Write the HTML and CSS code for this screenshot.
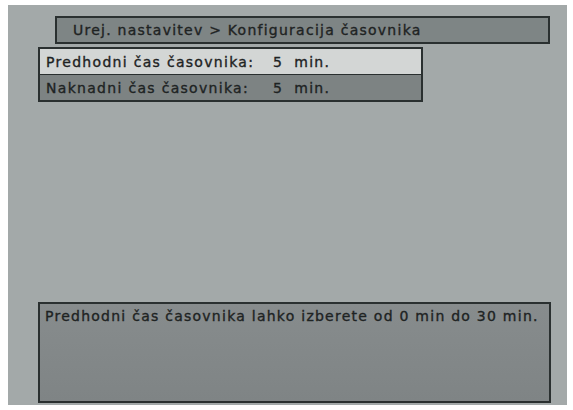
FILE: index.html
```html
<!DOCTYPE html>
<html>
<head>
<meta charset="utf-8">
<link rel="stylesheet" href="styles.css">
</head>
<body>
<div class="screen">
  <div class="title">Urej. nastavitev &gt; Konfiguracija časovnika</div>
  <div class="menu">
    <div class="row row-sel"><span class="label">Predhodni čas časovnika:</span><span class="num">5</span><span class="unit">min.</span></div>
    <div class="row"><span class="label">Naknadni čas časovnika:</span><span class="num">5</span><span class="unit">min.</span></div>
  </div>
  <div class="help">Predhodni čas časovnika lahko izberete od 0 min do 30 min.</div>
</div>
</body>
</html>
```

FILE: styles.css
```css
html, body {
  margin: 0;
  padding: 0;
  background: #ffffff;
}
body {
  padding: 5px 6px 5px 8px;
  font-family: "DejaVu Sans", Verdana, sans-serif;
  font-size: 14px;
  color: #1e2323;
  -webkit-text-stroke: 0.35px #1e2323;
}
.screen {
  width: 559px;
  height: 400px;
  box-sizing: border-box;
  background: #a3a9a9;
  padding: 11px 16px 2px 30px;
  display: flex;
  flex-direction: column;
  align-items: flex-start;
}
.title {
  margin-left: 17px;
  width: 495px;
  height: 28px;
  box-sizing: border-box;
  border: 2px solid #2a3030;
  background: #7e8585;
  padding-left: 16px;
  line-height: 24px;
  letter-spacing: 1.25px;
  white-space: nowrap;
}
.menu {
  margin-top: 3px;
  width: 385px;
  box-sizing: border-box;
  border: 2px solid #2a3030;
  display: flex;
  flex-direction: column;
}
.row {
  height: 25px;
  box-sizing: border-box;
  background: #7d8383;
  padding-left: 6px;
  display: flex;
  align-items: center;
  letter-spacing: 1.3px;
  white-space: nowrap;
}
.row-sel {
  background: #d3d6d5;
  border-bottom: 1px solid #2a3030;
  height: 26px;
}
.label {
  width: 227px;
}
.unit {
  margin-left: 11px;
}
.help {
  margin-top: auto;
  width: 513px;
  height: 101px;
  box-sizing: border-box;
  border: 2px solid #2a3030;
  background: linear-gradient(#878c8d, #7f8485);
  padding: 4px 0 0 5px;
  line-height: 17px;
  letter-spacing: 1.25px;
  white-space: nowrap;
}
```
